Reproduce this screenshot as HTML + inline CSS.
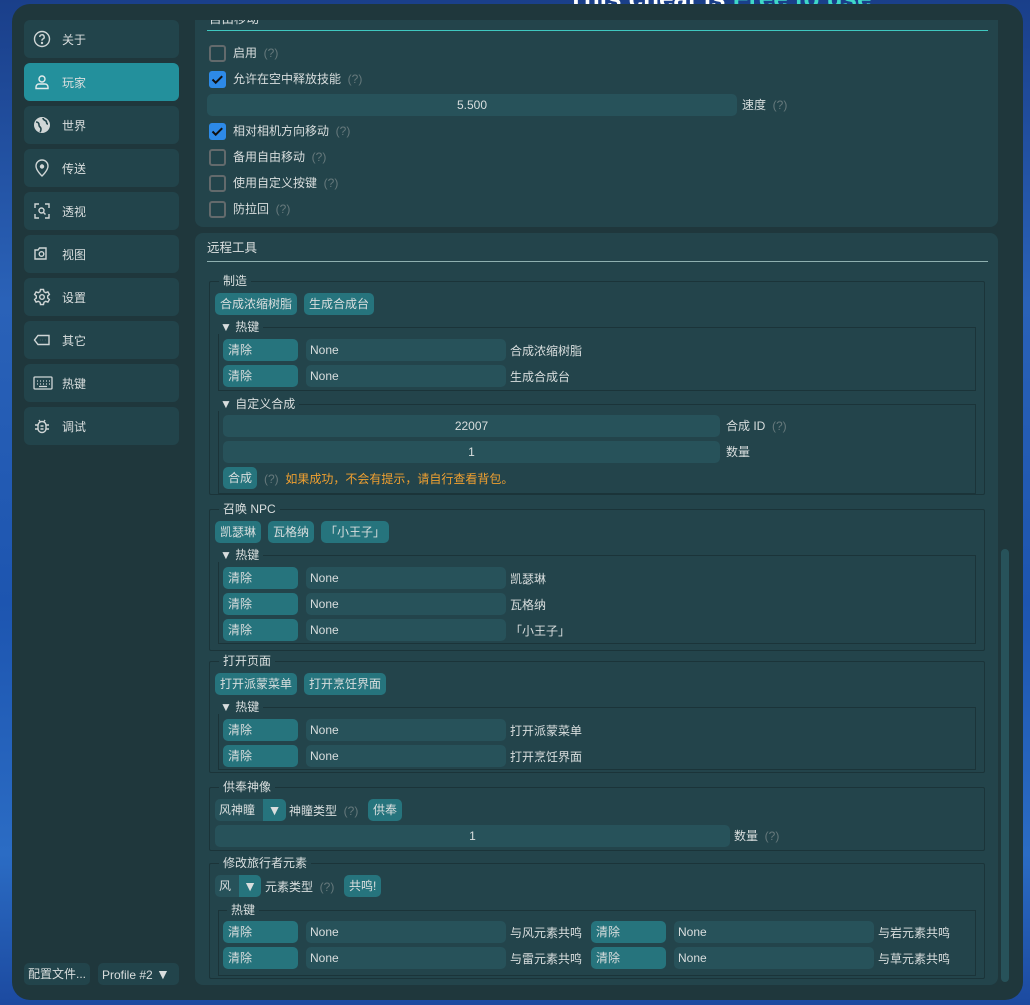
<!DOCTYPE html>
<html><head><meta charset="utf-8">
<style>
*{box-sizing:border-box;margin:0;padding:0}
body{width:1030px;height:1005px;overflow:hidden;position:relative;
background:linear-gradient(180deg,#1a3f8a 0%,#2a62b8 30%,#1d55b0 60%,#2b6cc4 85%,#1c4aa0 100%);
font-family:"Liberation Sans","Noto Sans CJK SC",sans-serif;font-size:12px;color:#d9dede}
.a{position:absolute}
.win{left:12px;top:4px;width:1011px;height:996px;background:#1f373c;border-radius:18px;overflow:hidden}
.side{left:24px;width:155px;height:38px;background:#22444b;border-radius:6px}
.side.sel{background:#23909c}
.side span{position:absolute;left:38px;top:11px;font-size:12px}
.side svg{position:absolute;left:9px;top:10px}
.panel{background:#23444b;border-radius:8px}
.cb{width:17px;height:17px;border:2px solid #636a6c;border-radius:3px;background:#23444b}
.cb.on{background:#2d8ae8;border:none}
.t{white-space:nowrap;line-height:14px}
.q{color:#66797c}
.fld{background:#27525a;border-radius:5px;height:22px;line-height:22px}
.btn{background:#26747d;border-radius:5px;height:22px;line-height:22px;padding:0 5px;white-space:nowrap}
.grp{border:1px solid #1b3439;border-radius:2px}
.leg{background:#23444b;padding:0 4px;line-height:14px;white-space:nowrap}
.inner{border:1px solid #1b3439}
.line{height:1px;background:#3fc8c0}
</style></head><body>
<div class="a t" style="left:568px;top:-15px;font-size:26px;line-height:26px;color:#fff;font-weight:bold">This cheat is <span style="color:#3fd8c8">Free to use</span></div>
<div class="a win"></div>

<!-- sidebar -->
<div class="a side" style="top:20px"><svg width="18" height="18" viewBox="0 0 18 18" fill="none" stroke="#d0d6d6" stroke-width="1.4"><circle cx="9" cy="9" r="7.5"/><path d="M6.8 7a2.2 2.2 0 1 1 3 2c-.6.3-.8.7-.8 1.3v.5"/><circle cx="9" cy="13" r=".5" fill="#d0d6d6"/></svg><span>关于</span></div>
<div class="a side sel" style="top:63px"><svg width="18" height="18" viewBox="0 0 18 18" fill="none" stroke="#e4ecec" stroke-width="1.4"><circle cx="9" cy="6" r="3"/><path d="M3 15.5v-1.5a3 3 0 0 1 3-3h6a3 3 0 0 1 3 3v1.5z"/></svg><span>玩家</span></div>
<div class="a side" style="top:106px"><svg width="18" height="18" viewBox="0 0 18 18"><circle cx="9" cy="9" r="8" fill="#d0d6d6"/><path d="M3 6c2 0 3 1 3 3s2 2 2 4-1 3-1 3M10 2c0 2 2 2 3 3s0 3 2 3" stroke="#22444b" stroke-width="1.6" fill="none"/></svg><span>世界</span></div>
<div class="a side" style="top:149px"><svg width="18" height="18" viewBox="0 0 18 18" fill="none" stroke="#d0d6d6" stroke-width="1.4"><path d="M9 17s-6-5.5-6-10a6 6 0 0 1 12 0c0 4.5-6 10-6 10z"/><circle cx="9" cy="7.5" r="1.5" fill="#d0d6d6"/></svg><span>传送</span></div>
<div class="a side" style="top:192px"><svg width="18" height="18" viewBox="0 0 18 18" fill="none" stroke="#d0d6d6" stroke-width="1.4"><path d="M2 6V2h4M12 2h4v4M16 12v4h-4M6 16H2v-4"/><circle cx="8.5" cy="8.5" r="2.5"/><path d="M10.5 10.5l2 2"/></svg><span>透视</span></div>
<div class="a side" style="top:235px"><svg width="18" height="18" viewBox="0 0 18 18" fill="none" stroke="#d0d6d6" stroke-width="1.4"><path d="M2 5h3l1.5-2h6.5v11H2z"/><circle cx="8.5" cy="9" r="2.3"/></svg><span>视图</span></div>
<div class="a side" style="top:278px"><svg width="18" height="18" viewBox="0 0 18 18" fill="none" stroke="#d0d6d6" stroke-width="1.4"><path d="M7.5 1.5h3l.5 2.2 1.8 1 2.1-.8 1.5 2.6-1.7 1.5v2l1.7 1.5-1.5 2.6-2.1-.8-1.8 1-.5 2.2h-3l-.5-2.2-1.8-1-2.1.8-1.5-2.6 1.7-1.5v-2L1.6 6.5l1.5-2.6 2.1.8 1.8-1z"/><circle cx="9" cy="9" r="2.3"/></svg><span>设置</span></div>
<div class="a side" style="top:321px"><svg width="18" height="18" viewBox="0 0 18 18" fill="none" stroke="#d0d6d6" stroke-width="1.4"><path d="M5 4.5h11v9H5L1.5 9z"/><path d="M7 9h.1M9.5 9h.1M12 9h.1" stroke-width="1.8"/></svg><span>其它</span></div>
<div class="a side" style="top:364px"><svg width="20" height="18" viewBox="0 0 20 18" fill="none" stroke="#d0d6d6" stroke-width="1.3"><rect x="1" y="3" width="18" height="12" rx="1"/><path d="M4 7h1M7 7h1M10 7h1M13 7h1M16 7h1M4 10h1M7 10h1M10 10h1M13 10h1M16 10h1M6 12.5h8"/></svg><span>热键</span></div>
<div class="a side" style="top:407px"><svg width="18" height="18" viewBox="0 0 18 18" fill="none" stroke="#d0d6d6" stroke-width="1.4"><rect x="5" y="4.5" width="8" height="11" rx="4"/><path d="M6 3l1 1.5M12 3l-1 1.5M2 8h3M13 8h3M2 12h3M13 12h3M7.5 9h3M7.5 12h3"/></svg><span>调试</span></div>

<div class="a btn" style="left:24px;top:963px;width:66px;background:#22444b;padding:0 4px">配置文件...</div>
<div class="a btn" style="left:98px;top:963px;width:81px;background:#22444b;padding:0 4px">Profile #2 <span style="font-size:14px">▼</span></div>

<!-- panel 1 -->
<div class="a" style="left:195px;top:20px;width:803px;height:207px;background:#23444b;border-radius:0 0 8px 8px;overflow:hidden">
  <div class="a t" style="left:14px;top:-8px;font-size:12.5px">自由移动</div>
</div>
<div class="a line" style="left:207px;top:30px;width:781px"></div>

<div class="a cb" style="left:209px;top:45px"></div><div class="a t" style="left:233px;top:46px">启用 <span class="q">&nbsp;(?)</span></div>
<div class="a cb on" style="left:209px;top:71px"><svg width="17" height="17" viewBox="0 0 17 17"><path d="M3.5 8.5l3.2 3.2 6.5-6.5" stroke="#111" stroke-width="2" fill="none"/></svg></div><div class="a t" style="left:233px;top:72px">允许在空中释放技能 <span class="q">&nbsp;(?)</span></div>
<div class="a fld" style="left:207px;top:94px;width:530px;text-align:center">5.500</div><div class="a t" style="left:742px;top:98px">速度 <span class="q">&nbsp;(?)</span></div>
<div class="a cb on" style="left:209px;top:123px"><svg width="17" height="17" viewBox="0 0 17 17"><path d="M3.5 8.5l3.2 3.2 6.5-6.5" stroke="#111" stroke-width="2" fill="none"/></svg></div><div class="a t" style="left:233px;top:124px">相对相机方向移动 <span class="q">&nbsp;(?)</span></div>
<div class="a cb" style="left:209px;top:149px"></div><div class="a t" style="left:233px;top:150px">备用自由移动 <span class="q">&nbsp;(?)</span></div>
<div class="a cb" style="left:209px;top:175px"></div><div class="a t" style="left:233px;top:176px">使用自定义按键 <span class="q">&nbsp;(?)</span></div>
<div class="a cb" style="left:209px;top:201px"></div><div class="a t" style="left:233px;top:202px">防拉回 <span class="q">&nbsp;(?)</span></div>

<!-- panel 2 -->
<div class="a panel" style="left:195px;top:233px;width:803px;height:752px"></div>
<div class="a t" style="left:207px;top:241px;font-size:12.5px">远程工具</div>
<div class="a line" style="left:207px;top:261px;width:781px;background:#8fb0b0"></div>

<!-- scrollbar -->
<div class="a" style="left:1001px;top:549px;width:8px;height:433px;background:#27525a;border-radius:4px"></div>

<!-- 制造 -->
<div class="a grp" style="left:209px;top:281px;width:776px;height:214px"></div>
<div class="a leg" style="left:219px;top:274px">制造</div>
<div class="a btn" style="left:215px;top:293px">合成浓缩树脂</div>
<div class="a btn" style="left:304px;top:293px">生成合成台</div>
<div class="a inner" style="left:218px;top:327px;width:758px;height:64px"></div>
<div class="a leg" style="left:216px;top:320px">▼ 热键</div>
<div class="a btn" style="left:223px;top:339px;width:75px">清除</div><div class="a fld" style="left:306px;top:339px;width:200px;padding-left:4px">None</div><div class="a t" style="left:510px;top:344px">合成浓缩树脂</div>
<div class="a btn" style="left:223px;top:365px;width:75px">清除</div><div class="a fld" style="left:306px;top:365px;width:200px;padding-left:4px">None</div><div class="a t" style="left:510px;top:370px">生成合成台</div>
<div class="a inner" style="left:218px;top:404px;width:758px;height:90px"></div>
<div class="a leg" style="left:216px;top:397px">▼ 自定义合成</div>
<div class="a fld" style="left:223px;top:415px;width:497px;text-align:center">22007</div><div class="a t" style="left:726px;top:419px">合成 ID <span class="q">&nbsp;(?)</span></div>
<div class="a fld" style="left:223px;top:441px;width:497px;text-align:center">1</div><div class="a t" style="left:726px;top:445px">数量</div>
<div class="a btn" style="left:223px;top:467px">合成</div><div class="a t" style="left:264px;top:472px"><span class="q">(?)</span> <span style="color:#f0a030">&nbsp;如果成功，不会有提示，请自行查看背包。</span></div>

<!-- 召唤 NPC -->
<div class="a grp" style="left:209px;top:509px;width:776px;height:142px"></div>
<div class="a leg" style="left:219px;top:502px">召唤 NPC</div>
<div class="a btn" style="left:215px;top:521px">凯瑟琳</div>
<div class="a btn" style="left:268px;top:521px">瓦格纳</div>
<div class="a btn" style="left:321px;top:521px;padding:0 4px">「小王子」</div>
<div class="a inner" style="left:218px;top:555px;width:758px;height:89px"></div>
<div class="a leg" style="left:216px;top:548px">▼ 热键</div>
<div class="a btn" style="left:223px;top:567px;width:75px">清除</div><div class="a fld" style="left:306px;top:567px;width:200px;padding-left:4px">None</div><div class="a t" style="left:510px;top:572px">凯瑟琳</div>
<div class="a btn" style="left:223px;top:593px;width:75px">清除</div><div class="a fld" style="left:306px;top:593px;width:200px;padding-left:4px">None</div><div class="a t" style="left:510px;top:598px">瓦格纳</div>
<div class="a btn" style="left:223px;top:619px;width:75px">清除</div><div class="a fld" style="left:306px;top:619px;width:200px;padding-left:4px">None</div><div class="a t" style="left:510px;top:624px">「小王子」</div>

<!-- 打开页面 -->
<div class="a grp" style="left:209px;top:661px;width:776px;height:112px"></div>
<div class="a leg" style="left:219px;top:654px">打开页面</div>
<div class="a btn" style="left:215px;top:673px">打开派蒙菜单</div>
<div class="a btn" style="left:304px;top:673px">打开烹饪界面</div>
<div class="a inner" style="left:218px;top:707px;width:758px;height:63px"></div>
<div class="a leg" style="left:216px;top:700px">▼ 热键</div>
<div class="a btn" style="left:223px;top:719px;width:75px">清除</div><div class="a fld" style="left:306px;top:719px;width:200px;padding-left:4px">None</div><div class="a t" style="left:510px;top:724px">打开派蒙菜单</div>
<div class="a btn" style="left:223px;top:745px;width:75px">清除</div><div class="a fld" style="left:306px;top:745px;width:200px;padding-left:4px">None</div><div class="a t" style="left:510px;top:750px">打开烹饪界面</div>

<!-- 供奉神像 -->
<div class="a grp" style="left:209px;top:787px;width:776px;height:64px"></div>
<div class="a leg" style="left:219px;top:780px">供奉神像</div>
<div class="a fld" style="left:215px;top:799px;width:71px;padding-left:4px">风神瞳</div>
<div class="a btn" style="left:263px;top:799px;width:23px;border-radius:0 5px 5px 0;text-align:center;font-size:14px;padding:0">▼</div>
<div class="a t" style="left:289px;top:804px">神瞳类型 <span class="q">&nbsp;(?)</span></div>
<div class="a btn" style="left:368px;top:799px">供奉</div>
<div class="a fld" style="left:215px;top:825px;width:515px;text-align:center">1</div><div class="a t" style="left:734px;top:829px">数量 <span class="q">&nbsp;(?)</span></div>

<!-- 修改旅行者元素 -->
<div class="a grp" style="left:209px;top:863px;width:776px;height:116px"></div>
<div class="a leg" style="left:219px;top:856px">修改旅行者元素</div>
<div class="a fld" style="left:215px;top:875px;width:46px;padding-left:4px">风</div>
<div class="a btn" style="left:239px;top:875px;width:22px;border-radius:0 5px 5px 0;text-align:center;font-size:14px;padding:0">▼</div>
<div class="a t" style="left:265px;top:880px">元素类型 <span class="q">&nbsp;(?)</span></div>
<div class="a btn" style="left:344px;top:875px">共鸣!</div>
<div class="a inner" style="left:218px;top:910px;width:758px;height:66px"></div>
<div class="a leg" style="left:227px;top:903px">热键</div>
<div class="a btn" style="left:223px;top:921px;width:75px">清除</div><div class="a fld" style="left:306px;top:921px;width:200px;padding-left:4px">None</div><div class="a t" style="left:510px;top:926px">与风元素共鸣</div>
<div class="a btn" style="left:591px;top:921px;width:75px">清除</div><div class="a fld" style="left:674px;top:921px;width:200px;padding-left:4px">None</div><div class="a t" style="left:878px;top:926px">与岩元素共鸣</div>
<div class="a btn" style="left:223px;top:947px;width:75px">清除</div><div class="a fld" style="left:306px;top:947px;width:200px;padding-left:4px">None</div><div class="a t" style="left:510px;top:952px">与雷元素共鸣</div>
<div class="a btn" style="left:591px;top:947px;width:75px">清除</div><div class="a fld" style="left:674px;top:947px;width:200px;padding-left:4px">None</div><div class="a t" style="left:878px;top:952px">与草元素共鸣</div>
</body></html>
